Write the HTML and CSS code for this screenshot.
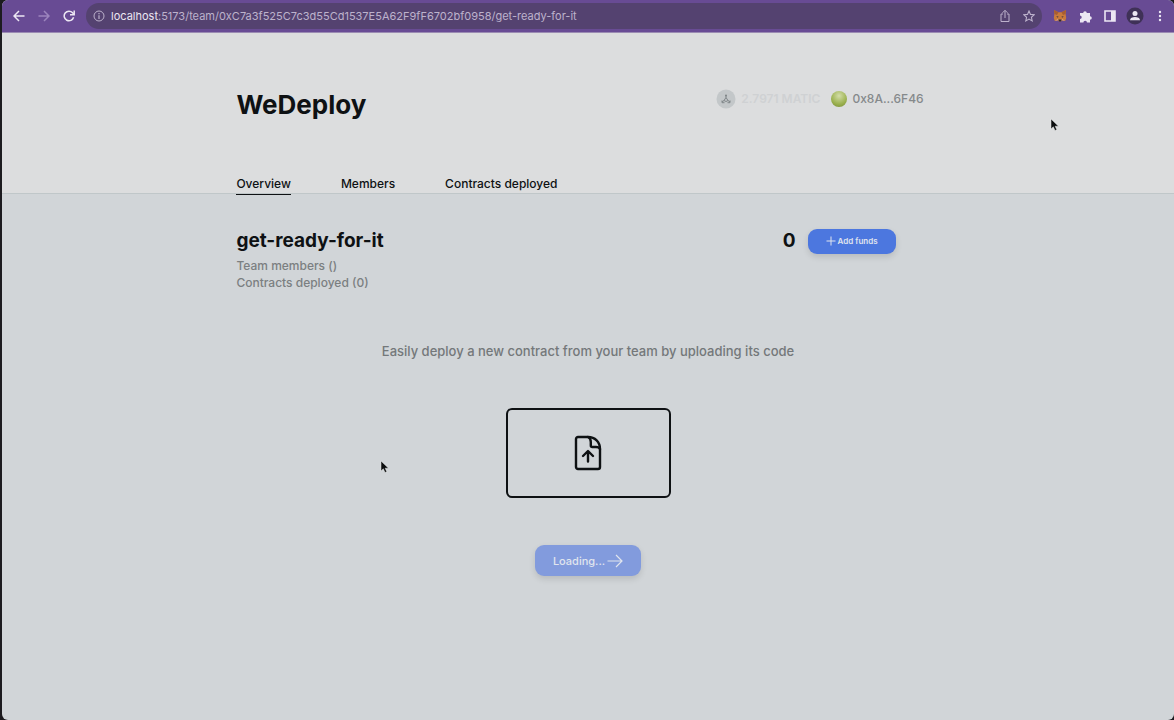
FILE: index.html
```html
<!DOCTYPE html>
<html lang="en">
<head>
  <meta charset="UTF-8">
  <meta name="viewport" content="width=device-width, initial-scale=1.0">
  <title>WeDeploy</title>
  <link rel="stylesheet" href="styles.css">
</head>
<body>
  <div class="window">
    <div class="toolbar">
      <button class="tool" aria-label="Back">
        <svg width="12" height="12" viewBox="0 0 12 12" fill="none" stroke="currentColor" stroke-width="1.5"><path d="M11.5 6H1.2M6 1L1 6l5 5"/></svg>
      </button>
      <button class="tool dim" aria-label="Forward">
        <svg width="12" height="12" viewBox="0 0 12 12" fill="none" stroke="currentColor" stroke-width="1.5"><path d="M.5 6h10.3M6 1l5 5-5 5"/></svg>
      </button>
      <button class="tool" aria-label="Reload">
        <svg width="12" height="12" viewBox="0 0 12 12" fill="none" stroke="currentColor" stroke-width="1.5"><path d="M10.6 7.3A4.8 4.8 0 1 1 9.6 2.8L11 4.4"/><path d="M11.2.6v4.2H7"/></svg>
      </button>
      <div class="address">
        <button class="tool soft" aria-label="Site information">
          <svg width="12" height="12" viewBox="0 0 12 12" fill="none" stroke="currentColor"><circle cx="6" cy="6" r="5"/><path d="M6 5.3V9M6 3v1.2" stroke-width="1.2"/></svg>
        </button>
        <div class="url"><span class="host">localhost</span>:5173/team/0xC7a3f525C7c3d55Cd1537E5A62F9fF6702bf0958/get-ready-for-it</div>
        <button class="tool soft" aria-label="Share">
          <svg width="12" height="14" viewBox="0 0 12 14" fill="none" stroke="currentColor"><path d="M4 5H2v7.5h8V5H8M6 9V1.5M3.5 3.8L6 1.3l2.5 2.5"/></svg>
        </button>
        <button class="tool soft" aria-label="Bookmark">
          <svg width="12" height="12" viewBox="0 0 12 12" fill="none" stroke="currentColor" stroke-width="1.1"><path d="M6 1l1.5 3.4 3.7.4-2.8 2.5.8 3.6L6 9.1l-3.2 1.8.8-3.6L.8 4.8l3.7-.4z"/></svg>
        </button>
      </div>
      <button class="tool" aria-label="MetaMask">
        <svg width="14" height="14" viewBox="0 0 14 14">
          <path d="M1 1l4.5 2.2h3L13 1l-.4 4 .6 4-1 3-3.2-.8L8 12.5H6L5 11.2 1.8 12l-1-3 .6-4z" fill="#c97a3c"/>
          <path d="M1 1l4.5 2.2L4 6 1.4 5zM13 1L8.5 3.2 10 6l2.6-1z" fill="#a85d31"/>
          <path d="M3.2 7.2l2.3.3-.7 1.2zM10.8 7.2l-2.3.3.7 1.2z" fill="#3e3445"/>
          <path d="M5.4 10.4h3.2L8 12.5H6z" fill="#2f2a36"/>
          <path d="M1.8 12l3-2.3.6 1.5zM12.2 12l-3-2.3-.6 1.5z" fill="#d8a078"/>
        </svg>
      </button>
      <button class="tool" aria-label="Extensions">
        <svg width="13" height="13" viewBox="0 0 13 13" fill="currentColor"><path d="M1 3h3.2a1.8 1.8 0 0 1 3.6 0H11v3.2a1.8 1.8 0 0 1 0 3.6v2.7H8a1.8 1.8 0 0 0-3.600 0H1V9a1.700 1.700 0 0 0 0-3.400z"/></svg>
      </button>
      <button class="tool" aria-label="Side panel">
        <svg width="12" height="12" viewBox="0 0 12 12"><path d="M1 1h10v10H1z" fill="none" stroke="currentColor" stroke-width="1.6"/><path d="M7 1h4v10H7z" fill="currentColor"/></svg>
      </button>
      <button class="tool" aria-label="Profile">
        <svg width="18" height="18" viewBox="0 0 18 18"><circle cx="9" cy="9" r="8.500" fill="#3f3157"/><circle cx="9" cy="6.500" r="2.500" fill="currentColor"/><path d="M4 13.200c0-4.400 10-4.400 10 0z" fill="currentColor"/></svg>
      </button>
      <button class="tool" aria-label="Menu">
        <svg width="4" height="12" viewBox="0 0 4 12" fill="currentColor"><circle cx="2" cy="2" r="1.200"/><circle cx="2" cy="6" r="1.200"/><circle cx="2" cy="10" r="1.200"/></svg>
      </button>
    </div>

    <header class="header">
      <div class="container">
        <div class="brand-row">
          <h1>WeDeploy</h1>
          <div class="wallet">
            <svg width="20" height="20" viewBox="0 0 20 20" fill="none" stroke="#7f8588"><circle cx="10" cy="10" r="9.500" fill="#c3c7c9" stroke="none"/><path d="M10 6v2.500M10 8.500l-2 3 2 1 2-1zM8 11.500L6 13M12 11.500l2 1.500M6 11.500v2.200h2.500M14 11.500v2.200h-2.500"/><circle cx="10" cy="6.500" r="1" fill="#7f8588" stroke="none"/></svg>
            <span class="balance">2.7971 MATIC</span>
            <span class="avatar"></span>
            <span class="account">0x8A...6F46</span>
          </div>
        </div>
        <nav class="tabs">
          <a class="active" href="#overview">Overview</a>
          <a href="#members">Members</a>
          <a href="#contracts">Contracts deployed</a>
        </nav>
      </div>
    </header>

    <main class="container">
      <div class="team-row">
        <div class="team">
          <h2>get-ready-for-it</h2>
          <p>Team members ()</p>
          <p>Contracts deployed (0)</p>
        </div>
        <div class="funds">
          <span class="amount">0</span>
          <button class="btn btn-small">
            <svg width="10" height="10" viewBox="0 0 10 10" stroke="currentColor"><path d="M5 .5v9M.5 5h9"/></svg>
            Add funds
          </button>
        </div>
      </div>

      <div class="deploy">
        <label for="contract-file">Easily deploy a new contract from your team by uploading its code</label>
        <label class="upload">
          <input type="file" id="contract-file" aria-label="Contract file">
          <svg width="28" height="36" viewBox="0 0 28 36" fill="none" stroke="currentColor" stroke-width="2.400" stroke-linejoin="round" stroke-linecap="round"><path d="M4 2h10c7 0 12 5 12 12v18a2 2 0 0 1-2 2H4a2 2 0 0 1-2-2V4a2 2 0 0 1 2-2z"/><path d="M14 2c2.200 1 2.800 3 2.800 5v3.500a1.500 1.500 0 0 0 1.500 1.500H22c2 0 3.500.8 4 2"/><path d="M14 26.500V17M9 21l5-5 5 5"/></svg>
        </label>
        <button class="btn loading">
          Loading...
          <svg width="16" height="14" viewBox="0 0 16 14" fill="none" stroke="currentColor" stroke-width="1.200"><path d="M.5 7h14.500M9 1l6 6-6 6"/></svg>
        </button>
      </div>
    </main>
  </div>

  <svg class="cursor cursor-top" width="10" height="14" viewBox="0 0 10 14"><path d="M1 1v10l2.300-2.200L5 12.500l1.800-.8L5.200 8.200h3.300z" fill="#0b0d0e" stroke="#eceeef" stroke-width=".5"/></svg>
  <svg class="cursor cursor-main" width="10" height="14" viewBox="0 0 10 14"><path d="M1 1v10l2.300-2.200L5 12.500l1.800-.8L5.200 8.200h3.300z" fill="#0b0d0e" stroke="#eceeef" stroke-width=".5"/></svg>
</body>
</html>
```
FILE: styles.css
```css
* {
  box-sizing: border-box;
}
body {
  margin: 0;
  padding-left: 2px;
  font-family: Inter, 'Open Sans', sans-serif;
  background: #1c1b1f;
  color: #0e1113;
}
h1, h2, p {
  margin: 0;
}
button {
  font-family: inherit;
  border: none;
  cursor: pointer;
}
.window {
  min-height: 100vh;
  background: #d1d5d8;
  border-radius: 6px;
  overflow: hidden;
}
.toolbar {
  display: flex;
  align-items: center;
  gap: 1px;
  padding: 3px 2px 3px 5px;
  background: #684b94;
  border-bottom: 1px solid #9b8bb3;
  color: #ece7f3;
}
.tool {
  display: flex;
  align-items: center;
  justify-content: center;
  flex: none;
  width: 24px;
  height: 24px;
  padding: 0;
  background: none;
  color: inherit;
}
.dim {
  color: #9c84bd;
}
.soft {
  color: #bdb2cc;
}
.address {
  flex: 1;
  display: flex;
  align-items: center;
  height: 26px;
  margin: 0 5px 0 4px;
  padding: 0 1px;
  background: #544270;
  border-radius: 13px;
}
.url {
  flex: 1;
  font-size: 11px;
  color: #bdb2cc;
}
.host {
  color: #ece7f3;
}
.container {
  width: 60%;
  margin: 0 auto;
}
.header {
  background: #dcddde;
  border-bottom: 1px solid #c0c7c9;
}
.brand-row {
  display: flex;
  align-items: flex-start;
  justify-content: space-between;
  padding: 54px 16px 0 0;
}
h1 {
  font-size: 26px;
  line-height: 36px;
  font-weight: 700;
}
.wallet {
  display: flex;
  align-items: center;
  gap: 5px;
  font-size: 12px;
  line-height: 24px;
  font-weight: 500;
}
.balance {
  color: #cfd1d3;
  font-weight: 600;
}
.avatar {
  width: 16px;
  height: 16px;
  margin-left: 6px;
  border-radius: 50%;
  background: radial-gradient(circle at 50% 30%, #d3dda8, #9bb14f 60%, #768a34);
}
.account {
  color: #85898b;
}
.tabs {
  display: flex;
  gap: 50px;
  margin-top: 53px;
  margin-bottom: -2px;
}
.tabs a {
  padding-bottom: 2px;
  font-size: 12px;
  line-height: 16px;
  font-weight: 500;
  color: #0e1113;
  text-decoration: none;
  border-bottom: 1px solid transparent;
}
.tabs .active {
  border-color: #0e1113;
}
.team-row {
  display: flex;
  align-items: flex-start;
  justify-content: space-between;
  padding: 34px 44px 0 0;
}
h2 {
  margin-bottom: 3px;
  font-size: 19px;
  line-height: 26px;
  font-weight: 700;
}
.team p {
  font-size: 12px;
  line-height: 17px;
  font-weight: 500;
  color: #7b7f81;
}
.funds {
  display: flex;
  align-items: center;
  gap: 12px;
}
.amount {
  font-size: 19px;
  line-height: 26px;
  font-weight: 700;
}
.btn {
  display: flex;
  align-items: center;
  justify-content: center;
  gap: 2px;
  height: 31px;
  padding: 0 18px;
  border-radius: 9px;
  background: #4c77df;
  color: #e0e5ee;
  font-size: 11px;
  font-weight: 500;
  box-shadow: 0 3px 6px rgba(0, 0, 0, 0.12);
}
.btn-small {
  height: 25px;
  font-size: 8px;
  font-weight: 600;
}
.deploy {
  display: flex;
  flex-direction: column;
  align-items: center;
  padding-top: 50px;
  font-size: 13px;
  line-height: 20px;
  font-weight: 500;
  color: #74787a;
}
.upload {
  display: flex;
  align-items: center;
  justify-content: center;
  width: 165px;
  height: 90px;
  margin: 47px 0;
  border: 2px solid #0e1113;
  border-radius: 6px;
  color: #0e1113;
  cursor: pointer;
}
.upload input {
  position: absolute;
  width: 1px;
  height: 1px;
  opacity: 0;
}
.loading {
  background: #829bdd;
}
/* pointers float above the page */
.cursor {
  position: absolute;
}
.cursor-top {
  left: 1050px;
  top: 118px;
}
.cursor-main {
  left: 380px;
  top: 460px;
}
```
